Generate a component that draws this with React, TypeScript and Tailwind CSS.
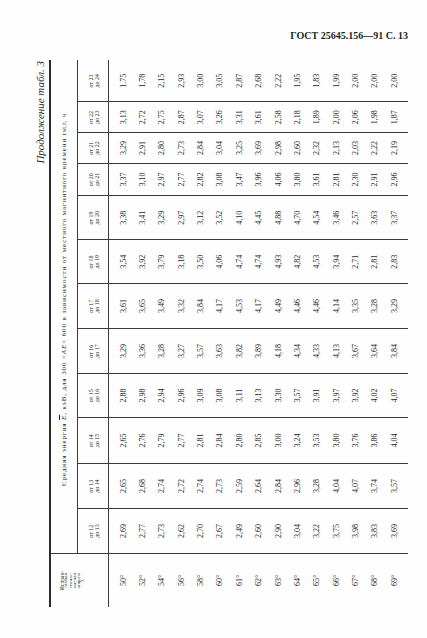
import React from 'react';

const latitudes = ['50°', '52°', '54°', '56°', '58°', '60°', '61°', '62°', '63°', '64°', '65°', '66°', '67°', '68°', '69°'];

// landscape columns, left to right (hour ranges of magnetic local time)
const columns: { from: string; to: string; w: string; values: string[] }[] = [
  { from: '12', to: '13', w: 'w-[44px]', values: ['2,69', '2,77', '2,73', '2,62', '2,70', '2,67', '2,49', '2,60', '2,90', '3,04', '3,22', '3,75', '3,98', '3,83', '3,69'] },
  { from: '13', to: '14', w: 'w-[45px]', values: ['2,65', '2,68', '2,74', '2,72', '2,74', '2,73', '2,59', '2,64', '2,84', '2,96', '3,28', '4,04', '4,07', '3,74', '3,57'] },
  { from: '14', to: '15', w: 'w-[46px]', values: ['2,65', '2,76', '2,79', '2,77', '2,81', '2,84', '2,80', '2,85', '3,00', '3,24', '3,53', '3,80', '3,76', '3,86', '4,04'] },
  { from: '15', to: '16', w: 'w-[44px]', values: ['2,88', '2,98', '2,94', '2,96', '3,09', '3,08', '3,11', '3,13', '3,30', '3,57', '3,91', '3,97', '3,92', '4,02', '4,07'] },
  { from: '16', to: '17', w: 'w-[45px]', values: ['3,29', '3,36', '3,28', '3,27', '3,57', '3,63', '3,82', '3,89', '4,18', '4,34', '4,33', '4,13', '3,67', '3,64', '3,84'] },
  { from: '17', to: '18', w: 'w-[45px]', values: ['3,61', '3,65', '3,49', '3,32', '3,84', '4,17', '4,53', '4,17', '4,49', '4,46', '4,46', '4,14', '3,35', '3,28', '3,29'] },
  { from: '18', to: '19', w: 'w-[43.5px]', values: ['3,54', '3,92', '3,79', '3,18', '3,50', '4,06', '4,74', '4,74', '4,93', '4,82', '4,53', '3,94', '2,71', '2,81', '2,83'] },
  { from: '19', to: '20', w: 'w-[44.5px]', values: ['3,38', '3,41', '3,29', '2,97', '3,12', '3,52', '4,10', '4,45', '4,88', '4,70', '4,54', '3,46', '2,57', '3,63', '3,37'] },
  { from: '20', to: '21', w: 'w-[32px]', values: ['3,37', '3,10', '2,97', '2,77', '2,82', '3,08', '3,47', '3,96', '4,06', '3,80', '3,61', '2,81', '2,30', '2,91', '2,96'] },
  { from: '21', to: '22', w: 'w-[31px]', values: ['3,29', '2,91', '2,80', '2,73', '2,84', '3,04', '3,25', '3,69', '2,98', '2,60', '2,32', '2,13', '2,03', '2,22', '2,19'] },
  { from: '22', to: '23', w: 'w-[30.5px]', values: ['3,13', '2,72', '2,75', '2,87', '3,07', '3,26', '3,31', '3,61', '2,58', '2,18', '1,89', '2,00', '2,06', '1,98', '1,87'] },
  { from: '23', to: '24', w: 'w-[42.5px]', values: ['1.75', '1,78', '2,15', '2,93', '3,00', '3,05', '2,87', '2,68', '2,22', '1,95', '1,83', '1,99', '2,00', '2,00', '2,00'] },
];

function ValueColumn({ values }: { values: string[] }) {
  return (
    <div className="flex flex-col pt-[5px] pb-[4px]">
      {values.map((v, i) => (
        <div key={i} className="h-[19.36px] flex items-center justify-center text-[8px] leading-none">
          {v}
        </div>
      ))}
    </div>
  );
}

function Table() {
  return (
    <div className="w-[547px] border-t-2 border-[#2b2b2b] flex">
      {/* latitude column */}
      <div className="w-[54px] shrink-0 border-r border-[#3a3a3a] flex flex-col">
        <div className="h-[58px] border-b border-[#3a3a3a] pt-[9px] flex flex-col items-center text-[5px] leading-[4.3px]">
          <span className="text-[5.5px]">Исправ-</span>
          <span>ленная</span>
          <span>геомаг-</span>
          <span>нитная</span>
          <span>широта</span>
          <span className="italic">λ</span>
        </div>
        <ValueColumn values={latitudes} />
      </div>

      {/* energy columns */}
      <div className="flex-1 flex flex-col">
        <div className="h-[27px] border-b border-[#3a3a3a] flex items-center justify-center pl-[14px] text-[7px] leading-none tracking-[0.9px] whitespace-nowrap">
          Средняя энергия&nbsp;
          <span className="italic overline">E</span>, кэВ, для 300 &lt; <span className="italic">AE</span> &lt; 600 в зависимости от местного магнитного времени&nbsp;
          <span className="italic">t</span>
          <sub className="italic text-[5px] tracking-normal">MLT</sub>, ч
        </div>
        <div className="flex">
          {columns.map((c, i) => (
            <div key={c.from} className={`${c.w} shrink-0 flex flex-col ${i > 0 ? 'border-l border-[#3a3a3a]' : ''}`}>
              <div className="h-[31px] border-b border-[#3a3a3a] flex items-center justify-center">
                <div className="flex flex-col text-[6px] leading-[6px] pt-[1px]">
                  <span>от {c.from}</span>
                  <span>до {c.to}</span>
                </div>
              </div>
              <ValueColumn values={c.values} />
            </div>
          ))}
        </div>
      </div>
    </div>
  );
}

export default function App() {
  return (
    <div className="w-[427px] h-[638px] bg-[#fefefe] text-[#1e1e1e] overflow-hidden flex flex-col [font-family:'Liberation_Serif',serif]">
      <div className="h-[60px] shrink-0 pt-[30px] pr-[19px] text-right text-[10px] leading-[12px] font-bold">
        ГОСТ 25645.156—91 С. 13
      </div>

      {/* the table is printed sideways; laid out in landscape then turned */}
      <div className="ml-[35px] w-[373px] h-[547px] shrink-0">
        <div className="w-[547px] h-[373px] origin-top-left [transform:translateY(547px)_rotate(-90deg)] flex flex-col">
          <div className="h-[14px] shrink-0 text-right italic text-[11px] leading-[11px] pr-[1px]">
            Продолжение табл. 3
          </div>
          <Table />
        </div>
      </div>
    </div>
  );
}
